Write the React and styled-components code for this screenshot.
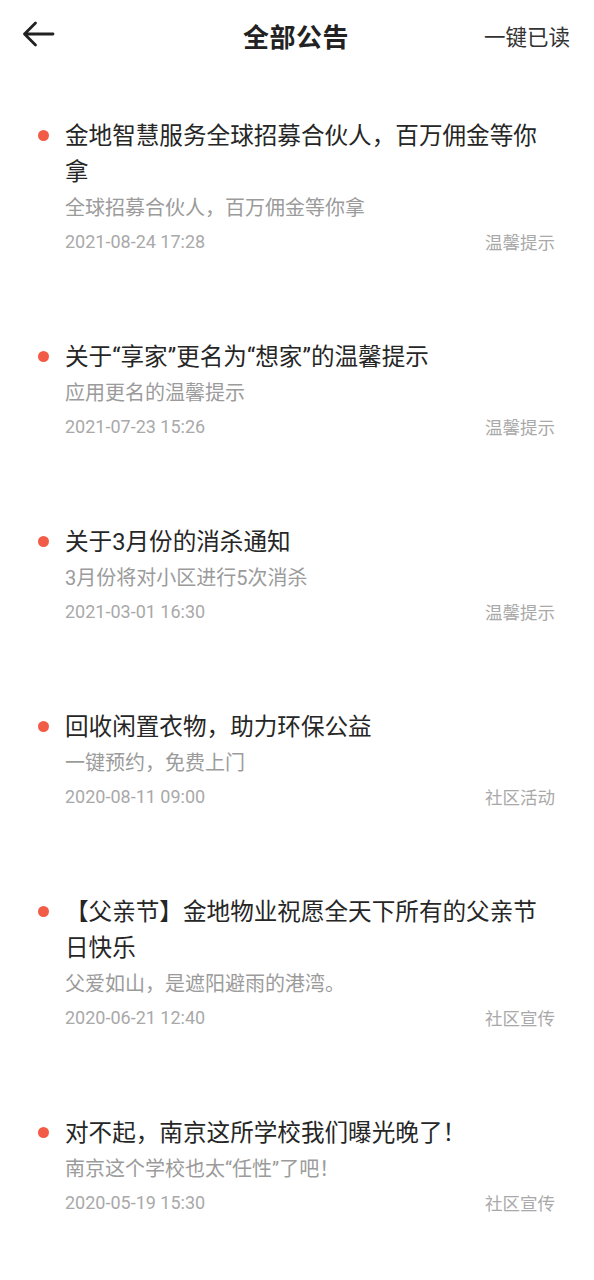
import React from "react";
import styled, { createGlobalStyle } from "styled-components";

const GlobalStyle = createGlobalStyle`
  body {
    margin: 0;
    background: #fff;
    font-family: Roboto, "Noto Sans CJK SC", "Noto Sans", sans-serif;
    -webkit-font-smoothing: antialiased;
  }
`;

const Page = styled.div`
  width: 594px;
  min-height: 1280px;
  background: #fff;
`;

const Header = styled.header`
  height: 70px;
  display: grid;
  grid-template-columns: 1fr auto 1fr;
  align-items: center;
  padding: 0 24px 0 22px;
`;

const BackButton = styled.button`
  justify-self: start;
  display: flex;
  align-items: center;
  padding: 0;
  margin-top: -3px;
  border: none;
  background: none;
  cursor: pointer;
`;

const Title = styled.h1`
  margin: 0;
  font-size: 26px;
  font-weight: 700;
  color: #222;
  letter-spacing: 0.5px;
`;

const ReadAll = styled.span`
  justify-self: end;
  font-size: 21.5px;
  color: #333;
`;

const List = styled.ul`
  list-style: none;
  margin: 0;
  padding: 48px 39px 0 38px;
  display: flex;
  flex-direction: column;
  gap: 83px;
`;

const Item = styled.li`
  display: flex;
  align-items: flex-start;
  gap: 16px;
`;

const Dot = styled.span`
  flex: none;
  width: 11px;
  height: 11px;
  margin-top: 12px;
  border-radius: 50%;
  background: ${(props) => (props.read ? "transparent" : "#f25c47")};
`;

const Body = styled.div`
  flex: 1;
  min-width: 0;
`;

const ItemTitle = styled.div`
  font-size: 23.6px;
  line-height: 36px;
  color: #262626;
`;

const Summary = styled.div`
  font-size: 20px;
  line-height: 36px;
  color: #9b9b9b;
`;

const Meta = styled.div`
  display: flex;
  justify-content: space-between;
  align-items: center;
  height: 30px;
  font-size: 18px;
  color: #a9a9a9;
`;

const Tag = styled.span`
  font-size: 17.5px;
`;

const notices = [
  {
    title: "金地智慧服务全球招募合伙人，百万佣金等你拿",
    summary: "全球招募合伙人，百万佣金等你拿",
    time: "2021-08-24 17:28",
    tag: "温馨提示",
  },
  {
    title: "关于“享家”更名为“想家”的温馨提示",
    summary: "应用更名的温馨提示",
    time: "2021-07-23 15:26",
    tag: "温馨提示",
  },
  {
    title: "关于3月份的消杀通知",
    summary: "3月份将对小区进行5次消杀",
    time: "2021-03-01 16:30",
    tag: "温馨提示",
  },
  {
    title: "回收闲置衣物，助力环保公益",
    summary: "一键预约，免费上门",
    time: "2020-08-11 09:00",
    tag: "社区活动",
  },
  {
    title: "【父亲节】金地物业祝愿全天下所有的父亲节日快乐",
    summary: "父爱如山，是遮阳避雨的港湾。",
    time: "2020-06-21 12:40",
    tag: "社区宣传",
  },
  {
    title: "对不起，南京这所学校我们曝光晚了！",
    summary: "南京这个学校也太“任性”了吧！",
    time: "2020-05-19 15:30",
    tag: "社区宣传",
  },
];

const BackIcon = () => (
  <svg width="33" height="26" viewBox="0 0 33 26" fill="none">
    <path
      d="M31 13H2.5M13.5 2L2.5 13L13.5 24"
      stroke="#222"
      strokeWidth="2.8"
      strokeLinecap="round"
      strokeLinejoin="round"
    />
  </svg>
);

const App = () => {
  return (
    <Page>
      <GlobalStyle />
      <Header>
        <BackButton aria-label="返回">
          <BackIcon />
        </BackButton>
        <Title>全部公告</Title>
        <ReadAll>一键已读</ReadAll>
      </Header>
      <List>
        {notices.map((n) => (
          <Item key={n.time}>
            <Dot />
            <Body>
              <ItemTitle>{n.title}</ItemTitle>
              <Summary>{n.summary}</Summary>
              <Meta>
                <span>{n.time}</span>
                <Tag>{n.tag}</Tag>
              </Meta>
            </Body>
          </Item>
        ))}
      </List>
    </Page>
  );
};

export default App;
